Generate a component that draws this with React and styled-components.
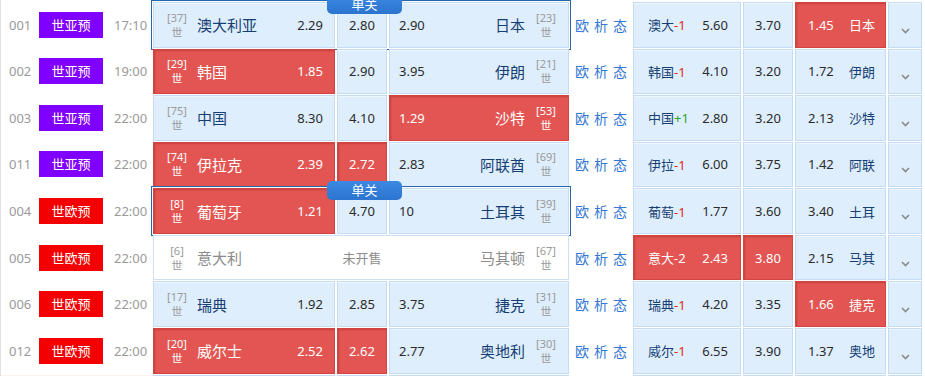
import React from "react";
import styled, { createGlobalStyle, css } from "styled-components";

const GlobalStyle = createGlobalStyle`
  html, body { margin: 0; padding: 0; background: #fff; }
  body {
    font-family: "Noto Sans", "Noto Sans CJK SC", sans-serif;
    overflow: hidden;
  }
`;

const matches = [
  {
    no: "001", league: "世亚预", kind: "asia", time: "17:10", single: true,
    home: { rank: 37, name: "澳大利亚" }, away: { rank: 23, name: "日本" },
    odds: ["2.29", "2.80", "2.90"], hot: [],
    hc: { team: "澳大", line: "-1", odds: ["5.60", "3.70", "1.45"], away: "日本", hot: [2] },
  },
  {
    no: "002", league: "世亚预", kind: "asia", time: "19:00",
    home: { rank: 29, name: "韩国" }, away: { rank: 21, name: "伊朗" },
    odds: ["1.85", "2.90", "3.95"], hot: [0],
    hc: { team: "韩国", line: "-1", odds: ["4.10", "3.20", "1.72"], away: "伊朗", hot: [] },
  },
  {
    no: "003", league: "世亚预", kind: "asia", time: "22:00",
    home: { rank: 75, name: "中国" }, away: { rank: 53, name: "沙特" },
    odds: ["8.30", "4.10", "1.29"], hot: [2],
    hc: { team: "中国", line: "+1", odds: ["2.80", "3.20", "2.13"], away: "沙特", hot: [] },
  },
  {
    no: "011", league: "世亚预", kind: "asia", time: "22:00",
    home: { rank: 74, name: "伊拉克" }, away: { rank: 69, name: "阿联酋" },
    odds: ["2.39", "2.72", "2.83"], hot: [0, 1],
    hc: { team: "伊拉", line: "-1", odds: ["6.00", "3.75", "1.42"], away: "阿联", hot: [] },
  },
  {
    no: "004", league: "世欧预", kind: "europe", time: "22:00", single: true,
    home: { rank: 8, name: "葡萄牙" }, away: { rank: 39, name: "土耳其" },
    odds: ["1.21", "4.70", "10"], hot: [0],
    hc: { team: "葡萄", line: "-1", odds: ["1.77", "3.60", "3.40"], away: "土耳", hot: [] },
  },
  {
    no: "005", league: "世欧预", kind: "europe", time: "22:00", closed: true,
    home: { rank: 6, name: "意大利" }, away: { rank: 67, name: "马其顿" },
    odds: [], hot: [],
    hc: { team: "意大", line: "-2", odds: ["2.43", "3.80", "2.15"], away: "马其", hot: [0, 1] },
  },
  {
    no: "006", league: "世欧预", kind: "europe", time: "22:00",
    home: { rank: 17, name: "瑞典" }, away: { rank: 31, name: "捷克" },
    odds: ["1.92", "2.85", "3.75"], hot: [],
    hc: { team: "瑞典", line: "-1", odds: ["4.20", "3.35", "1.66"], away: "捷克", hot: [2] },
  },
  {
    no: "012", league: "世欧预", kind: "europe", time: "22:00",
    home: { rank: 20, name: "威尔士" }, away: { rank: 30, name: "奥地利" },
    odds: ["2.52", "2.62", "2.77"], hot: [0, 1],
    hc: { team: "威尔", line: "-1", odds: ["6.55", "3.90", "1.37"], away: "奥地", hot: [] },
  },
];

const Page = styled.div`
  padding-top: 2px;
  border-left: 1px solid #e2e2e2;
  width: 921px;
`;

const Row = styled.div`
  display: flex;
  align-items: flex-start;
  height: 46.57px;
`;

const Info = styled.div`
  width: 152px;
  height: calc(100% - 1px);
  display: flex;
  align-items: center;
  color: #9a9a9a;
  font-size: 13px;
  background: ${(p) => (p.$peach ? "#fdf0ea" : "transparent")};
`;

const No = styled.span`
  width: 30px;
  padding-left: 8px;
`;

const Tag = styled.span`
  width: 64px;
  height: 26px;
  line-height: 26px;
  text-align: center;
  color: #fff;
  font-size: 13px;
  background: ${(p) => (p.$kind === "asia" ? "#8000ff" : "#f50000")};
`;

const Time = styled.span`
  margin-left: 11px;
`;

const MatchGroup = styled.div`
  position: relative;
  display: flex;
  gap: 2px;
  width: 416px;
  height: calc(100% - 1px);
  ${(p) =>
    p.$single &&
    css`
      outline: 1px solid #2766aa;
      outline-offset: 1px;
    `}
`;

const SingleBadge = styled.span`
  position: absolute;
  left: 174px;
  top: -7px;
  z-index: 3;
  width: 75px;
  height: 19px;
  line-height: 19px;
  text-align: center;
  color: #fff;
  font-size: 13px;
  border-radius: 5px;
  background: linear-gradient(#3d89e2, #2b74cf);
`;

const Cell = styled.div`
  box-sizing: border-box;
  width: ${(p) => p.$w}px;
  height: 100%;
  display: flex;
  align-items: center;
  justify-content: ${(p) => p.$justify || "center"};
  padding: ${(p) => p.$pad || "0"};
  font-size: 13px;
  ${(p) =>
    p.$hot
      ? css`
          background: #e35552;
          border: 1px solid #d3443f;
          color: #fff;
          box-shadow: inset 1px 1px 2px rgba(110, 0, 0, 0.25);
        `
      : p.$closed
      ? css`
          background: transparent;
          color: #8c8c8c;
        `
      : css`
          background: #deeefc;
          border: 1px solid #c5dbf2;
          color: #2b2b2b;
          box-shadow: inset 0 1px 0 #eef6fe;
        `}
`;

const ClosedBox = styled.div`
  box-sizing: border-box;
  display: flex;
  gap: 2px;
  width: 416px;
  height: 100%;
  background: #fff;
  border: 1px solid #cfe0f3;
`;

const Rank = styled.span`
  display: flex;
  flex-direction: column;
  align-items: center;
  width: 22px;
  font-size: 11px;
  line-height: 15px;
  color: ${(p) => (p.$hot ? "#fff" : "#9a9a9a")};
`;

const TeamName = styled.span`
  font-size: 15px;
  color: ${(p) => (p.$hot ? "#fff" : p.$closed ? "#8c8c8c" : "#173e74")};
  margin: ${(p) => (p.$side === "home" ? "0 auto 0 9px" : "0 10px 0 auto")};
`;

const Links = styled.div`
  width: 64px;
  height: calc(100% - 1px);
  display: flex;
  align-items: center;
  justify-content: center;
  gap: 5px;
  font-size: 14px;
  color: #3577d4;
`;

const Handicap = styled.div`
  display: flex;
  gap: 2px;
  height: calc(100% - 1px);
`;

const HcTeam = styled.span`
  color: ${(p) => (p.$hot ? "#fff" : "#173e74")};
`;

const Line = styled.span`
  color: ${(p) => (p.$hot ? "#fff" : p.$sign === "+" ? "#29a329" : "#e8261a")};
`;

const HcAway = styled.span`
  color: ${(p) => (p.$hot ? "#fff" : "#173e74")};
`;

const Chevron = styled.svg`
  margin-top: 12px;
`;

function RankMark({ rank, hot }) {
  return (
    <Rank $hot={hot}>
      <span>[{rank}]</span>
      <span>世</span>
    </Rank>
  );
}

function MatchCells({ m }) {
  if (m.closed) {
    return (
      <ClosedBox>
        <Cell $w={181} $closed $justify="flex-start" $pad="0 0 0 12px">
          <RankMark rank={m.home.rank} />
          <TeamName $side="home" $closed>{m.home.name}</TeamName>
        </Cell>
        <Cell $w={50} $closed>未开售</Cell>
        <Cell $w={179} $closed $justify="flex-end" $pad="0 11px 0 0">
          <TeamName $side="away" $closed>{m.away.name}</TeamName>
          <RankMark rank={m.away.rank} />
        </Cell>
      </ClosedBox>
    );
  }
  const hot = (i) => m.hot.includes(i);
  return (
    <>
      <Cell $w={182} $hot={hot(0)} $justify="flex-start" $pad="0 11px 0 12px">
        <RankMark rank={m.home.rank} hot={hot(0)} />
        <TeamName $side="home" $hot={hot(0)}>{m.home.name}</TeamName>
        <span>{m.odds[0]}</span>
      </Cell>
      <Cell $w={50} $hot={hot(1)}>{m.odds[1]}</Cell>
      <Cell $w={180} $hot={hot(2)} $justify="flex-start" $pad="0 11px 0 9px">
        <span>{m.odds[2]}</span>
        <TeamName $side="away" $hot={hot(2)}>{m.away.name}</TeamName>
        <RankMark rank={m.away.rank} hot={hot(2)} />
      </Cell>
    </>
  );
}

function HandicapCells({ hc }) {
  const hot = (i) => hc.hot.includes(i);
  return (
    <Handicap>
      <Cell $w={108} $hot={hot(0)} $justify="space-between" $pad="0 12px 0 14px">
        <HcTeam $hot={hot(0)}>
          {hc.team}
          <Line $hot={hot(0)} $sign={hc.line[0]}>{hc.line}</Line>
        </HcTeam>
        <span>{hc.odds[0]}</span>
      </Cell>
      <Cell $w={50} $hot={hot(1)}>{hc.odds[1]}</Cell>
      <Cell $w={91} $hot={hot(2)} $justify="space-between" $pad="0 10px 0 12px">
        <span>{hc.odds[2]}</span>
        <HcAway $hot={hot(2)}>{hc.away}</HcAway>
      </Cell>
      <Cell $w={34}>
        <Chevron width="9" height="6" viewBox="0 0 9 6">
          <path d="M1 1 L4.5 4.5 L8 1" fill="none" stroke="#8a8a8a" strokeWidth="1.6" />
        </Chevron>
      </Cell>
    </Handicap>
  );
}

export default function App() {
  return (
    <Page>
      <GlobalStyle />
      {matches.map((m) => (
        <Row key={m.no}>
          <Info>
            <No>{m.no}</No>
            <Tag $kind={m.kind}>{m.league}</Tag>
            <Time>{m.time}</Time>
          </Info>
          <MatchGroup $single={m.single}>
            {m.single && <SingleBadge>单关</SingleBadge>}
            <MatchCells m={m} />
          </MatchGroup>
          <Links>
            <span>欧</span>
            <span>析</span>
            <span>态</span>
          </Links>
          <HandicapCells hc={m.hc} />
        </Row>
      ))}
      <Row>
        <Info $peach />
        <MatchGroup>
          <Cell $w={182} />
          <Cell $w={50} />
          <Cell $w={180} />
        </MatchGroup>
        <Links />
        <Handicap>
          <Cell $w={108} />
          <Cell $w={50} />
          <Cell $w={91} />
          <Cell $w={34} />
        </Handicap>
      </Row>
    </Page>
  );
}
